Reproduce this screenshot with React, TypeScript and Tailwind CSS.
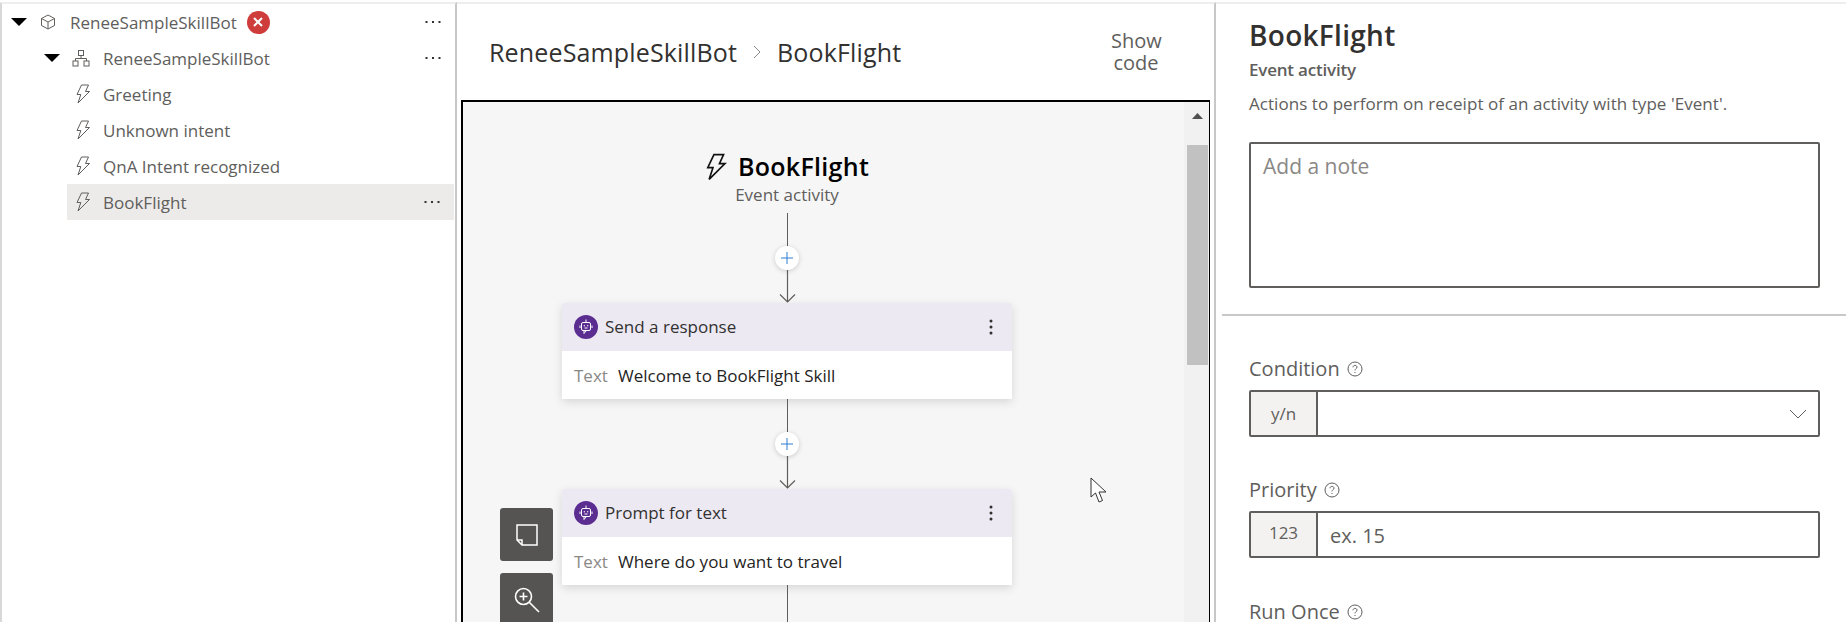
const font = "font-['Open_Sans','Noto_Sans',sans-serif]";

function Bolt({ className, width = 1 }: { className?: string; width?: number }) {
  return (
    <svg viewBox="0 0 16 20" fill="none" stroke="currentColor" strokeWidth={width} strokeLinejoin="miter" className={className}>
      <path d="M6.5 1H13.5L10.5 7.5H14.5L3 19L5.8 10.5H2L6.5 1Z" />
    </svg>
  );
}

function Cube() {
  return (
    <svg viewBox="0 0 16 16" fill="none" stroke="#605e5c" strokeWidth="1" className="w-4 h-4 shrink-0">
      <path d="M8 1L14.5 4.5V11.5L8 15L1.5 11.5V4.5L8 1Z" />
      <path d="M1.5 4.5L8 8L14.5 4.5M8 8V15" />
    </svg>
  );
}

function Tree() {
  return (
    <svg viewBox="0 0 18 18" fill="none" stroke="#605e5c" strokeWidth="1" className="w-[18px] h-[18px] shrink-0">
      <rect x="6.5" y="1.5" width="5" height="5" />
      <rect x="1" y="12" width="5" height="5" />
      <rect x="12" y="12" width="5" height="5" />
      <path d="M9 6.5V9.5M3.5 12V9.5H14.5V12" />
    </svg>
  );
}

function Dots() {
  return (
    <svg viewBox="0 0 16 4" fill="#323130" className="w-4 h-1 shrink-0">
      <rect x="0.5" y="1" width="2" height="2" />
      <rect x="7" y="1" width="2" height="2" />
      <rect x="13.5" y="1" width="2" height="2" />
    </svg>
  );
}

function Caret() {
  return (
    <svg viewBox="0 0 16 8" fill="#000" className="w-4 h-2 shrink-0">
      <path d="M0 0H16L8 8Z" />
    </svg>
  );
}

function TreeLeaf({ label, active }: { label: string; active?: boolean }) {
  return (
    <div className={`ml-[65px] mr-[1px] h-9 flex items-center pl-[8px] pr-[14px] ${active ? "bg-[#edebe9]" : ""}`}>
      <Bolt className="w-4 h-5 text-[#605e5c] shrink-0" />
      <span className="ml-[12px] mt-[1px] text-[17px] text-[#605e5c]">{label}</span>
      {active && (
        <span className="ml-auto">
          <Dots />
        </span>
      )}
    </div>
  );
}

function BotIcon() {
  return (
    <div className="w-6 h-6 rounded-full bg-[#5c2d91] flex items-center justify-center shrink-0">
      <svg viewBox="0 0 14 16" fill="none" stroke="#fff" strokeWidth="1" className="w-[14px] h-4">
        <path d="M7 0.5V3" />
        <rect x="2.5" y="3.5" width="9" height="8" rx="1.5" />
        <path d="M5 12V14.5L7 12" />
        <path d="M1 6.5V9M13 6.5V9" />
        <rect x="4.8" y="6" width="1" height="1.4" fill="#fff" stroke="none" />
        <rect x="8.2" y="6" width="1" height="1.4" fill="#fff" stroke="none" />
        <path d="M5.5 9H8.5" />
      </svg>
    </div>
  );
}

function Card({ title, text }: { title: string; text: string }) {
  return (
    <div className="w-[450px] rounded-t-[2px] bg-white shadow-[0_3px_10px_rgba(0,0,0,0.13)]">
      <div className="h-12 bg-[#ece9f3] rounded-t-[2px] flex items-center pl-3 pr-[19px]">
        <BotIcon />
        <span className="ml-[7px] text-[17px] text-[#323130]">{title}</span>
        <svg viewBox="0 0 4 16" fill="#323130" className="ml-auto w-1 h-4">
          <circle cx="2" cy="2" r="1.5" />
          <circle cx="2" cy="8" r="1.5" />
          <circle cx="2" cy="14" r="1.5" />
        </svg>
      </div>
      <div className="h-12 flex items-center pl-3 pt-[1px] text-[17px]">
        <span className="text-[#8a8886] w-[44px]">Text</span>
        <span className="text-[#252423]">{text}</span>
      </div>
    </div>
  );
}

function Connector() {
  return (
    <div className="h-[90px] flex flex-col items-center">
      <div className="w-px h-[33px] bg-[#605e5c]" />
      <div className="w-6 h-6 rounded-full bg-white shadow-[0_1px_5px_rgba(0,0,0,0.18)] flex items-center justify-center shrink-0">
        <svg viewBox="0 0 12 12" stroke="#2b7cd3" strokeWidth="1" className="w-3 h-3">
          <path d="M6 0V12M0 6H12" />
        </svg>
      </div>
      <svg viewBox="0 0 17 33" fill="none" stroke="#605e5c" strokeWidth="1.2" className="w-[17px] h-[33px] overflow-visible">
        <path d="M8.5 0V32M1 24.5L8.5 32L16 24.5" />
      </svg>
    </div>
  );
}

function Help() {
  return (
    <svg viewBox="0 0 16 16" fill="none" stroke="#605e5c" strokeWidth="1" className="w-4 h-4 ml-[7px] shrink-0">
      <circle cx="8" cy="8" r="7" />
      <path d="M6 6.3C6 5 7 4.4 8 4.4C9.2 4.4 10 5.1 10 6.1C10 7.6 8 7.6 8 9.4" />
      <path d="M8 11V12" />
    </svg>
  );
}

function Label({ text, top }: { text: string; top: string }) {
  return (
    <div className={`${top} h-6 flex items-center text-[20px] leading-5 text-[#605e5c]`}>
      {text}
      <Help />
    </div>
  );
}

export default function App() {
  return (
    <div className={`${font} w-[1846px] h-[622px] overflow-hidden bg-white flex pt-[2px]`}>
      {/* 왼쪽 트리 */}
      <div className="w-[457px] h-full shrink-0 border-t-2 border-l-2 border-r-2 border-t-[#eeeeee] border-l-[#d8d8d8] border-r-[#c8c8c8] flex flex-col">
        <div className="h-9 flex items-center pl-[9px] pr-[14px]">
          <Caret />
          <span className="ml-[13px]">
            <Cube />
          </span>
          <span className="ml-[14px] mt-[1px] text-[17px] text-[#605e5c]">ReneeSampleSkillBot</span>
          <span className="ml-[10px] w-[23px] h-[23px] rounded-full bg-[#cf3c3c] flex items-center justify-center">
            <svg viewBox="0 0 10 10" stroke="#fff" strokeWidth="2" className="w-[10px] h-[10px]">
              <path d="M1 1L9 9M9 1L1 9" />
            </svg>
          </span>
          <span className="ml-auto">
            <Dots />
          </span>
        </div>
        <div className="h-9 flex items-center pl-[42px] pr-[14px]">
          <Caret />
          <span className="ml-3">
            <Tree />
          </span>
          <span className="ml-[13px] mt-[1px] text-[17px] text-[#605e5c]">ReneeSampleSkillBot</span>
          <span className="ml-auto">
            <Dots />
          </span>
        </div>
        <TreeLeaf label="Greeting" />
        <TreeLeaf label="Unknown intent" />
        <TreeLeaf label="QnA Intent recognized" />
        <TreeLeaf label="BookFlight" active />
      </div>

      {/* 가운데 캔버스 */}
      <div className="w-[759px] h-full shrink-0 border-t-2 border-r-2 border-t-[#eeeeee] border-r-[#c8c8c8] flex flex-col">
        <div className="h-[96px] shrink-0 flex items-center pl-[32px] pr-[53px] text-[#323130]">
          <span className="mt-[1px] text-[25px] tracking-[0.15px]">ReneeSampleSkillBot</span>
          <svg viewBox="0 0 8 14" fill="none" stroke="#8a8886" strokeWidth="1" className="w-2 h-[14px] ml-4 mr-4">
            <path d="M1 1L7 7L1 13" />
          </svg>
          <span className="mt-[1px] text-[25px] tracking-[0.15px]">BookFlight</span>
          <span className="ml-auto w-[50px] text-center text-[20px] leading-[22px] text-[#605e5c]">Show code</span>
        </div>
        <div className="relative flex-1 min-h-0 ml-1 mr-1 border-t-2 border-x border-black border-l-2 flex overflow-hidden bg-[#f6f6f6]">
          <div className="w-[648px] shrink-0 flex flex-col items-center pt-[49px]">
            <div className="h-8 flex items-center">
              <Bolt className="w-[22px] h-7 text-[#111] mr-[11px]" width={1.2} />
              <span className="text-[25px] font-semibold tracking-[0.3px] text-black">BookFlight</span>
            </div>
            <div className="mt-[1px] h-[22px] flex items-center text-[17px] text-[#605e5c]">Event activity</div>
            <div className="mt-[7px]">
              <Connector />
            </div>
            <Card title="Send a response" text="Welcome to BookFlight Skill" />
            <Connector />
            <Card title="Prompt for text" text="Where do you want to travel" />
            <div className="w-px h-12 bg-[#605e5c] shrink-0" />
          </div>

          <div className="ml-auto w-[25px] shrink-0 bg-[#f1f1f1] flex flex-col items-center pl-[1px]">
            <svg viewBox="0 0 11 6" fill="#505050" className="w-[11px] h-[6px] mt-[11px]">
              <path d="M5.5 0L11 6H0Z" />
            </svg>
            <div className="w-[21px] h-[220px] mt-[26px] bg-[#c1c1c1]" />
          </div>

          {/* 좌측 플로팅 버튼 */}
          <div className="absolute left-[37px] top-[406px] flex flex-col gap-3">
            <div className="w-[53px] h-[53px] rounded-[3px] bg-[#565353] flex items-center justify-center">
              <svg viewBox="0 0 22 22" fill="none" stroke="#fff" strokeWidth="1.5" className="w-[22px] h-[22px]">
                <path d="M1 1H21V21H6L1 16V1Z" />
                <path d="M1 16H6V21" />
              </svg>
            </div>
            <div className="w-[53px] h-[53px] rounded-[3px] bg-[#565353] flex items-center justify-center">
              <svg viewBox="0 0 26 26" fill="none" stroke="#fff" strokeWidth="1.6" className="w-[26px] h-[26px]">
                <circle cx="9.5" cy="9.5" r="8" />
                <path d="M15.5 15.5L25 25M5.5 9.5H13.5M9.5 5.5V13.5" />
              </svg>
            </div>
          </div>

          {/* 마우스 커서 */}
          <svg viewBox="0 0 18 26" fill="#fff" stroke="#333" strokeWidth="1" className="absolute left-[627px] top-[375px] w-[18px] h-[26px]">
            <path d="M1 1V20L5.5 16L9 25L12.5 23.5L9 15H16L1 1Z" />
          </svg>
        </div>
      </div>

      {/* 오른쪽 속성 패널 */}
      <div className="flex-1 h-full border-t-2 border-t-[#eeeeee] flex flex-col">
        <div className="pl-[33px] pt-[12px]">
          <div className="h-[38px] flex items-center text-[28px] font-semibold tracking-[0.3px] text-[#323130]">BookFlight</div>
          <div className="mt-[6px] h-5 flex items-center text-[17px] font-semibold tracking-[-0.2px] text-[#605e5c]">Event activity</div>
          <div className="mt-[13px] h-[22px] flex items-center text-[17px] tracking-[0.05px] text-[#605e5c]">Actions to perform on receipt of an activity with type 'Event'.</div>
          <div className="mt-[27px] w-[571px] h-[146px] border-2 border-[#605e5c] rounded-[2px] px-[12px] pt-[8px] text-[21px] leading-7 text-[#8a8886]">Add a note</div>
        </div>
        <div className="ml-[6px] mt-[26px] h-[2px] shrink-0 bg-[#c8c8c8]" />
        <div className="pl-[33px]">
          <Label text="Condition" top="mt-[41px]" />
          <div className="mt-[9px] w-[571px] h-[47px] border-2 border-[#605e5c] rounded-[2px] flex items-center">
            <div className="w-[67px] h-full shrink-0 bg-[#f3f2f1] border-r-2 border-[#605e5c] flex items-center justify-center text-[17px] text-[#605e5c]">y/n</div>
            <svg viewBox="0 0 18 10" fill="none" stroke="#605e5c" strokeWidth="1" className="ml-auto mr-[11px] w-[18px] h-[10px]">
              <path d="M1 1L9 9L17 1" />
            </svg>
          </div>
          <Label text="Priority" top="mt-[41px]" />
          <div className="mt-[9px] w-[571px] h-[47px] border-2 border-[#605e5c] rounded-[2px] flex items-center">
            <div className="w-[67px] h-full shrink-0 bg-[#f3f2f1] border-r-2 border-[#605e5c] flex items-center justify-center pb-[3px] text-[17px] text-[#605e5c]">123</div>
            <span className="ml-[12px] mt-[3px] text-[20px] text-[#605e5c]">ex. 15</span>
          </div>
          <Label text="Run Once" top="mt-[42px]" />
        </div>
      </div>
    </div>
  );
}
